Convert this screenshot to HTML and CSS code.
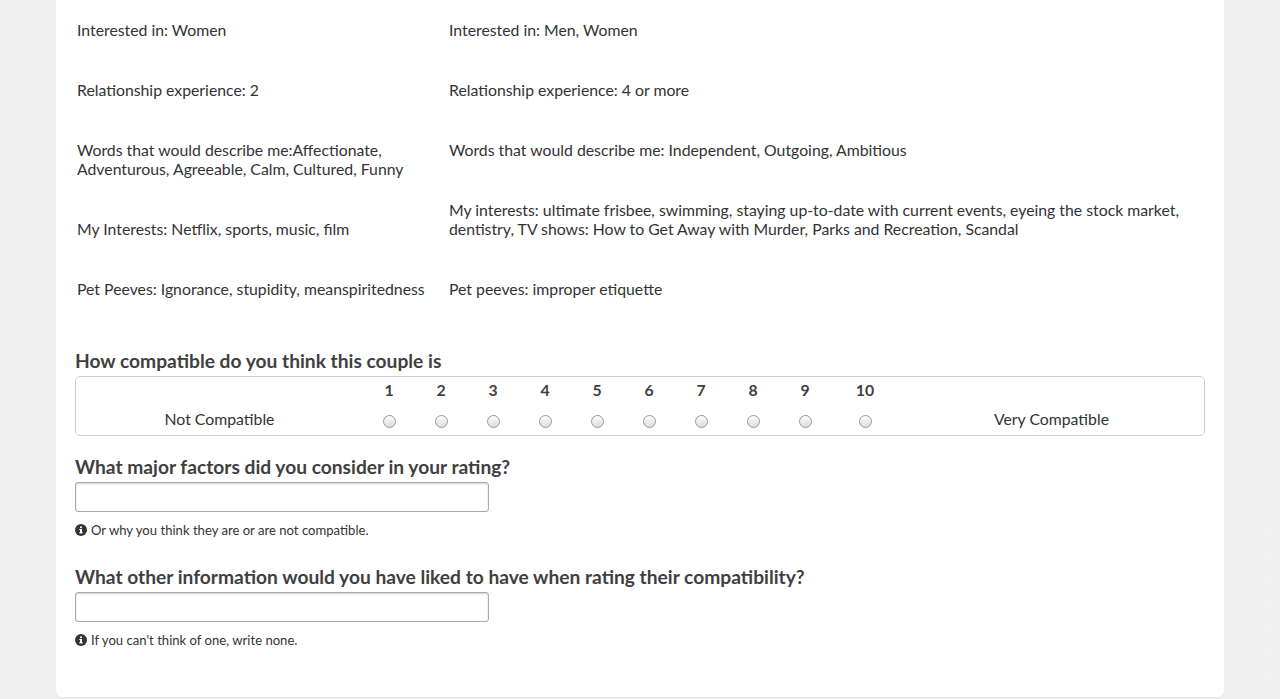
FILE: index.html
```html
<!DOCTYPE html>
<html>
<head>
<meta charset="utf-8">
<link rel="stylesheet" href="styles.css">
</head>
<body>
<div class="card">
  <div class="profiles">
    <div class="col">
      <p>Interested in: Women</p>
      <p>Relationship experience: 2</p>
      <p>Words that would describe me:Affectionate, Adventurous, Agreeable, Calm, Cultured, Funny</p>
      <p>My Interests: Netflix, sports, music, film</p>
      <p>Pet Peeves: Ignorance, stupidity, meanspiritedness</p>
    </div>
    <div class="col">
      <p>Interested in: Men, Women</p>
      <p>Relationship experience: 4 or more</p>
      <p>Words that would describe me: Independent, Outgoing, Ambitious</p>
      <p>My interests: ultimate frisbee, swimming, staying up-to-date with current events, eyeing the stock market, dentistry, TV shows: How to Get Away with Murder, Parks and Recreation, Scandal</p>
      <p>Pet peeves: improper etiquette</p>
    </div>
  </div>

  <h3 class="q q-first">How compatible do you think this couple is</h3>
  <div class="scale">
    <table>
      <tr class="nums">
        <td class="end left"></td>
        <td>1</td><td>2</td><td>3</td><td>4</td><td>5</td><td>6</td><td>7</td><td>8</td><td>9</td><td class="ten">10</td>
        <td class="end right"></td>
      </tr>
      <tr class="radios">
        <td class="end left">Not Compatible</td>
        <td><input type="radio" name="c"></td>
        <td><input type="radio" name="c"></td>
        <td><input type="radio" name="c"></td>
        <td><input type="radio" name="c"></td>
        <td><input type="radio" name="c"></td>
        <td><input type="radio" name="c"></td>
        <td><input type="radio" name="c"></td>
        <td><input type="radio" name="c"></td>
        <td><input type="radio" name="c"></td>
        <td class="ten"><input type="radio" name="c"></td>
        <td class="end right">Very Compatible</td>
      </tr>
    </table>
  </div>

  <h3 class="q">What major factors did you consider in your rating?</h3>
  <input class="text" type="text">
  <p class="help"><svg class="info" width="12" height="12" viewBox="0 0 12 12"><circle cx="6" cy="6" r="6" fill="#333"/><rect x="5" y="5" width="2" height="4.2" fill="#fff"/><rect x="4.2" y="5" width="2.8" height="1" fill="#fff"/><rect x="4.2" y="8.3" width="3.6" height="1" fill="#fff"/><circle cx="6" cy="3.3" r="1.05" fill="#fff"/></svg>Or why you think they are or are not compatible.</p>

  <h3 class="q q-after-help">What other information would you have liked to have when rating their compatibility?</h3>
  <input class="text" type="text">
  <p class="help"><svg class="info" width="12" height="12" viewBox="0 0 12 12"><circle cx="6" cy="6" r="6" fill="#333"/><rect x="5" y="5" width="2" height="4.2" fill="#fff"/><rect x="4.2" y="5" width="2.8" height="1" fill="#fff"/><rect x="4.2" y="8.3" width="3.6" height="1" fill="#fff"/><circle cx="6" cy="3.3" r="1.05" fill="#fff"/></svg>If you can't think of one, write none.</p>
</div>
</body>
</html>
```

FILE: styles.css
```css
html, body {
  margin: 0;
  padding: 0;
}
body {
  background-color: #f1f1f1;
  background-image:
    repeating-linear-gradient(90deg, rgba(255,255,255,0.12) 0 1px, transparent 1px 4px),
    repeating-linear-gradient(0deg, rgba(0,0,0,0.008) 0 1px, transparent 1px 3px);
  font-family: Lato, "Open Sans", sans-serif;
  color: #333;
  height: 699px;
  overflow: hidden;
}
.card {
  width: 1168px;
  box-sizing: border-box;
  margin: 0 0 0 56px;
  background: #fff;
  border-radius: 0 0 6px 6px;
  box-shadow: 0 1px 1px rgba(0,0,0,0.06);
  padding: 20px 19px 48px 19px;
}
.profiles {
  display: grid;
  grid-template-columns: 372px 1fr;
  align-items: start;
}
.col {
  padding-left: 2px;
}
.col p {
  margin: 0 0 41px 0;
  font-size: 15.8px;
  line-height: 19px;
}
.col p:last-child {
  margin-bottom: 0;
}
.q {
  margin: 20px 0 4px 0;
  font-size: 19.2px;
  line-height: 22px;
  font-weight: 700;
  color: #3f3f3f;
}
.q-first {
  margin-top: 52px;
}
.q-after-help {
  margin-top: 27px;
}
.scale {
  border: 1px solid #cfcfcf;
  border-radius: 5px;
  height: 58px;
}
.scale table {
  border-collapse: collapse;
  width: 100%;
  table-layout: fixed;
}
.scale td {
  width: 52px;
  padding: 0;
  text-align: center;
  font-size: 15.8px;
  line-height: 19px;
  vertical-align: top;
}
.scale td.end.left {
  width: 287px;
}
.scale td.ten {
  width: 68px;
}
.scale td.end.right {
  width: auto;
}
.nums td {
  height: 23px;
  padding-top: 3px;
  font-weight: 700;
  color: #3f3f3f;
}
.radios td {
  height: 26px;
  padding-top: 6px;
}
input[type="radio"] {
  -webkit-appearance: none;
  appearance: none;
  width: 13px;
  height: 13px;
  margin: 0;
  border: 1px solid #9a9a9a;
  border-radius: 50%;
  background: linear-gradient(#fcfcfc, #dedede);
  box-shadow: inset 0 1px 1px rgba(255,255,255,0.8);
  vertical-align: middle;
}
.text {
  display: block;
  width: 414px;
  height: 30px;
  box-sizing: border-box;
  border: 1px solid #a9a9a9;
  border-radius: 3px;
  box-shadow: inset 0 1px 2px rgba(0,0,0,0.18);
  margin: 0;
  padding: 4px 6px;
  font-family: inherit;
  font-size: 14px;
  background: #fff;
}
.help {
  margin: 9px 0 0 0;
  font-size: 13.1px;
  line-height: 18px;
  color: #333;
  display: flex;
  align-items: center;
}
.info {
  margin-right: 4px;
  flex: none;
}
```
